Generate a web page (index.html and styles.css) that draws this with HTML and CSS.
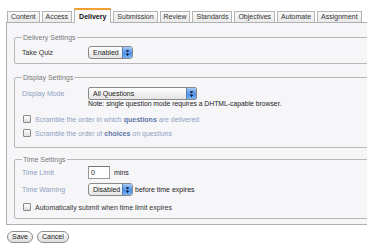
FILE: index.html
```html
<!DOCTYPE html>
<html lang="en">
<head>
  <meta charset="UTF-8" />
  <title>Quiz Settings</title>
  <link rel="stylesheet" href="styles.css">
</head>
<body>
  <div class="page">
    <ul class="tabs">
      <li class="tab">Content</li>
      <li class="tab">Access</li>
      <li class="tab active">Delivery</li>
      <li class="tab">Submission</li>
      <li class="tab">Review</li>
      <li class="tab">Standards</li>
      <li class="tab">Objectives</li>
      <li class="tab">Automate</li>
      <li class="tab">Assignment</li>
    </ul>

    <div class="panel">
      <fieldset class="group group-delivery">
        <legend>Delivery Settings</legend>
        <div class="row">
          <span class="label">Take Quiz</span>
          <span class="select select-short"><span class="select-text">Enabled</span><span class="stepper"></span></span>
        </div>
      </fieldset>

      <fieldset class="group group-display">
        <legend>Display Settings</legend>
        <div class="row">
          <span class="label disabled">Display Mode</span>
          <span class="select select-long"><span class="select-text">All Questions</span><span class="stepper"></span></span>
        </div>
        <div class="note">Note: single question mode requires a DHTML-capable browser.</div>
        <div class="check-row disabled first">
          <span class="box"></span><span>Scramble the order in which <b>questions</b> are delivered</span>
        </div>
        <div class="check-row disabled">
          <span class="box"></span><span>Scramble the order of <b>choices</b> on questions</span>
        </div>
      </fieldset>

      <fieldset class="group group-time">
        <legend>Time Settings</legend>
        <div class="row">
          <span class="label disabled">Time Limit</span>
          <span class="text-input">0</span>
          <span class="after">mins</span>
        </div>
        <div class="row row-warning">
          <span class="label disabled">Time Warning</span>
          <span class="select select-short"><span class="select-text">Disabled</span><span class="stepper"></span></span>
          <span class="after tight">before time expires</span>
        </div>
        <div class="check-row last">
          <span class="box"></span><span>Automatically submit when time limit expires</span>
        </div>
      </fieldset>
    </div>

    <div class="buttons">
      <button class="btn">Save</button>
      <button class="btn">Cancel</button>
    </div>
  </div>
</body>
</html>
```

FILE: styles.css
```css
body {
  margin: 0;
  background: #ffffff;
  font-family: "Liberation Sans", Arial, sans-serif;
  font-size: 7px;
  color: #333333;
}

.page {
  width: 361px;
  padding: 8px 0 0 6px;
  overflow: hidden;
}

/* tab strip */
.tabs {
  list-style: none;
  margin: 0;
  padding: 0 0 0 1px;
  display: flex;
  align-items: flex-end;
  gap: 2px;
  height: 14px;
}

.tab {
  height: 10px;
  line-height: 10px;
  padding: 0 3px;
  border: 1px solid #b4b4b4;
  border-bottom: none;
  background: linear-gradient(#fafafa, #e9e9e9);
  color: #333;
  white-space: nowrap;
}

.tab.active {
  height: 13px;
  line-height: 13px;
  padding: 0 4px;
  border-top: 2px solid #f0a030;
  background: #f8f8f9;
  font-weight: bold;
  color: #111;
  position: relative;
  top: 1px;
}

/* main panel */
.panel {
  width: 400px;
  border: 1px solid #b0b0b0;
  background: #f6f6f8;
  padding: 0 0 5px 7px;
}

.group {
  width: 380px;
  margin: 10px 0 0 0;
  padding: 0 0 4px 7px;
  border: 1px solid #b8b8b8;
  border-radius: 2px;
}

.group-display {
  margin-top: 9px;
  padding-bottom: 9px;
}

.group-time {
  margin-top: 7px;
  padding-bottom: 6px;
}

.group legend {
  padding: 0 1px;
  color: #7a7a7a;
  line-height: 9px;
}

.row {
  display: flex;
  align-items: center;
  height: 13px;
  margin-top: 4px;
}

.group-display .row {
  margin-top: 5px;
}

.group-time .row {
  margin-top: 2px;
}

.group-time .row-warning {
  margin-top: 4px;
}

.label {
  width: 66px;
  flex: none;
}

.disabled {
  color: #8e9fc2;
}

.disabled b {
  color: #5f75a8;
}

/* fake aqua select */
.select {
  display: flex;
  height: 11px;
  border: 1px solid #8a8a8a;
  border-radius: 3px;
  background: linear-gradient(#ffffff, #e4e4e4);
  overflow: hidden;
  color: #222;
}

.select-short {
  width: 43px;
}

.select-long {
  width: 107px;
  border-radius: 2px;
}

.select-text {
  flex: 1;
  padding-left: 4px;
  line-height: 11px;
  white-space: nowrap;
}

.stepper {
  width: 9px;
  flex: none;
  background:
    radial-gradient(circle at 50% 35%, #1d2a4a 0 1px, transparent 1.3px),
    radial-gradient(circle at 50% 68%, #1d2a4a 0 1px, transparent 1.3px),
    linear-gradient(#a9cdf7, #4a8fe6 55%, #7bb5f5);
  border-left: 1px solid #5a7fb8;
}

.note {
  margin-left: 66px;
  line-height: 8px;
  color: #222;
  font-size: 6.8px;
}

.check-row {
  display: flex;
  align-items: center;
  height: 10px;
  margin-top: 4px;
}

.check-row.first {
  margin-top: 6px;
}

.check-row.last {
  margin-top: 6px;
}

.box {
  width: 6px;
  height: 6px;
  flex: none;
  margin: 0 4px 0 1px;
  border: 1px solid #8a8a8a;
  border-radius: 1px;
  background: linear-gradient(#ffffff, #dedede);
}

.text-input {
  width: 18px;
  height: 11px;
  line-height: 11px;
  padding-left: 2px;
  border: 1px solid #9a9a9a;
  border-top-color: #777;
  background: #ffffff;
  color: #222;
}

.after {
  margin-left: 4px;
  color: #222;
}

.after.tight {
  margin-left: 2px;
}

/* buttons */
.buttons {
  display: flex;
  gap: 4px;
  margin-top: 6px;
  padding-left: 1px;
}

.btn {
  height: 12px;
  padding: 0 4px;
  font-family: "Liberation Sans", Arial, sans-serif;
  font-size: 7px;
  line-height: 10px;
  color: #222;
  border: 1px solid #8c8c8c;
  border-radius: 6px;
  background: linear-gradient(#ffffff, #dcdcdc);
}
```
